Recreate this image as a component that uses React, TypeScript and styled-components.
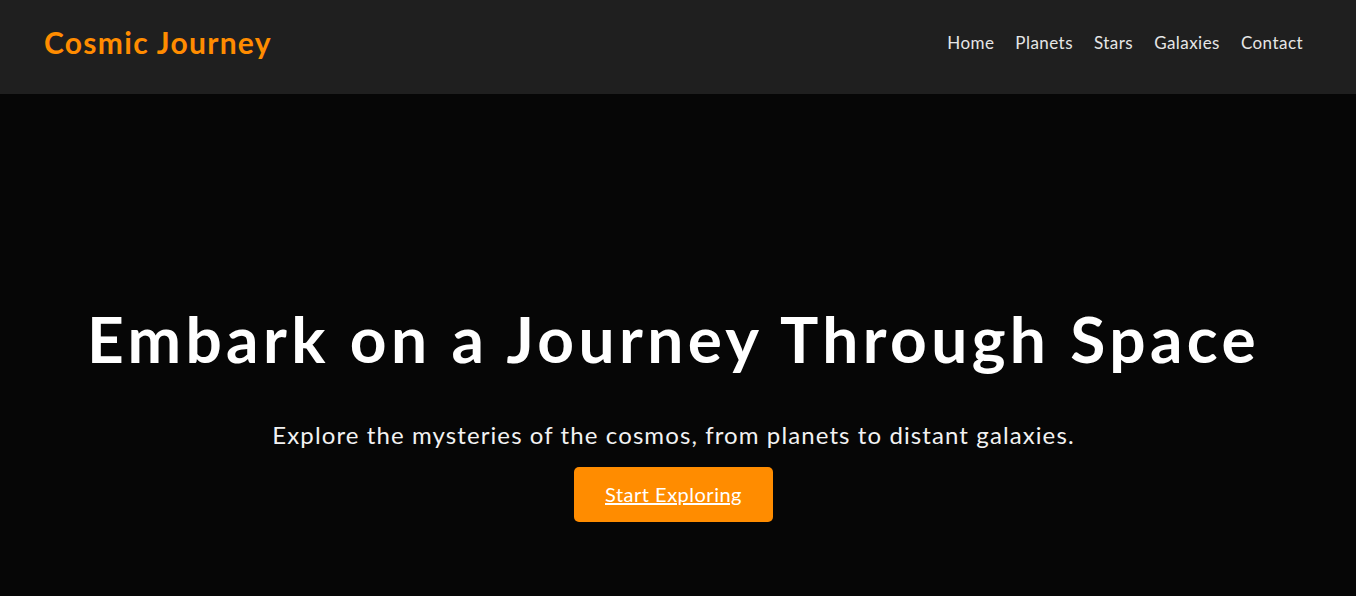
import React from "react";
import styled, { createGlobalStyle } from "styled-components";

const Global = createGlobalStyle`
  html, body { margin: 0; padding: 0; background: #060606; }
  body { font-family: Lato, "Open Sans", sans-serif; color: #fff; }
  * { box-sizing: border-box; }
`;

const Header = styled.header`
  height: 94px;
  background: #1f1f1f;
  display: flex;
  align-items: center;
  justify-content: space-between;
  padding: 0 53px 10px 44px;
`;

const Logo = styled.div`
  color: #ff8c00;
  font-size: 30px;
  font-weight: 700;
  letter-spacing: 1.3px;
`;

const Nav = styled.nav`
  display: flex;
  gap: 21px;
`;

const NavLink = styled.a`
  color: #e6e6e6;
  text-decoration: none;
  font-size: 17px;
  letter-spacing: 0.45px;
`;

const Hero = styled.section`
  display: flex;
  flex-direction: column;
  align-items: center;
  padding: 207px 9px 0 0;
  min-height: 502px;
  text-align: center;
`;

const Title = styled.h1`
  margin: 0;
  font-size: 64px;
  font-weight: 700;
  line-height: 1.2;
  letter-spacing: 4.4px;
`;

const Subtitle = styled.p`
  margin: 42px 0 18px;
  font-size: 24px;
  font-weight: 400;
  color: #f2f2f2;
  letter-spacing: 1.1px;
`;

const Button = styled.a`
  display: inline-flex;
  align-items: center;
  justify-content: center;
  width: 199px;
  height: 55px;
  background: #ff8c00;
  color: #fff;
  border-radius: 5px;
  font-size: 20px;
  letter-spacing: 0.5px;
  text-decoration: underline;
`;

export default function App() {
  return (
    <>
      <Global />
      <Header>
        <Logo>Cosmic Journey</Logo>
        <Nav>
          {["Home", "Planets", "Stars", "Galaxies", "Contact"].map((l) => (
            <NavLink key={l} href="#">{l}</NavLink>
          ))}
        </Nav>
      </Header>
      <Hero>
        <Title>Embark on a Journey Through Space</Title>
        <Subtitle>Explore the mysteries of the cosmos, from planets to distant galaxies.</Subtitle>
        <Button href="#">Start Exploring</Button>
      </Hero>
    </>
  );
}
